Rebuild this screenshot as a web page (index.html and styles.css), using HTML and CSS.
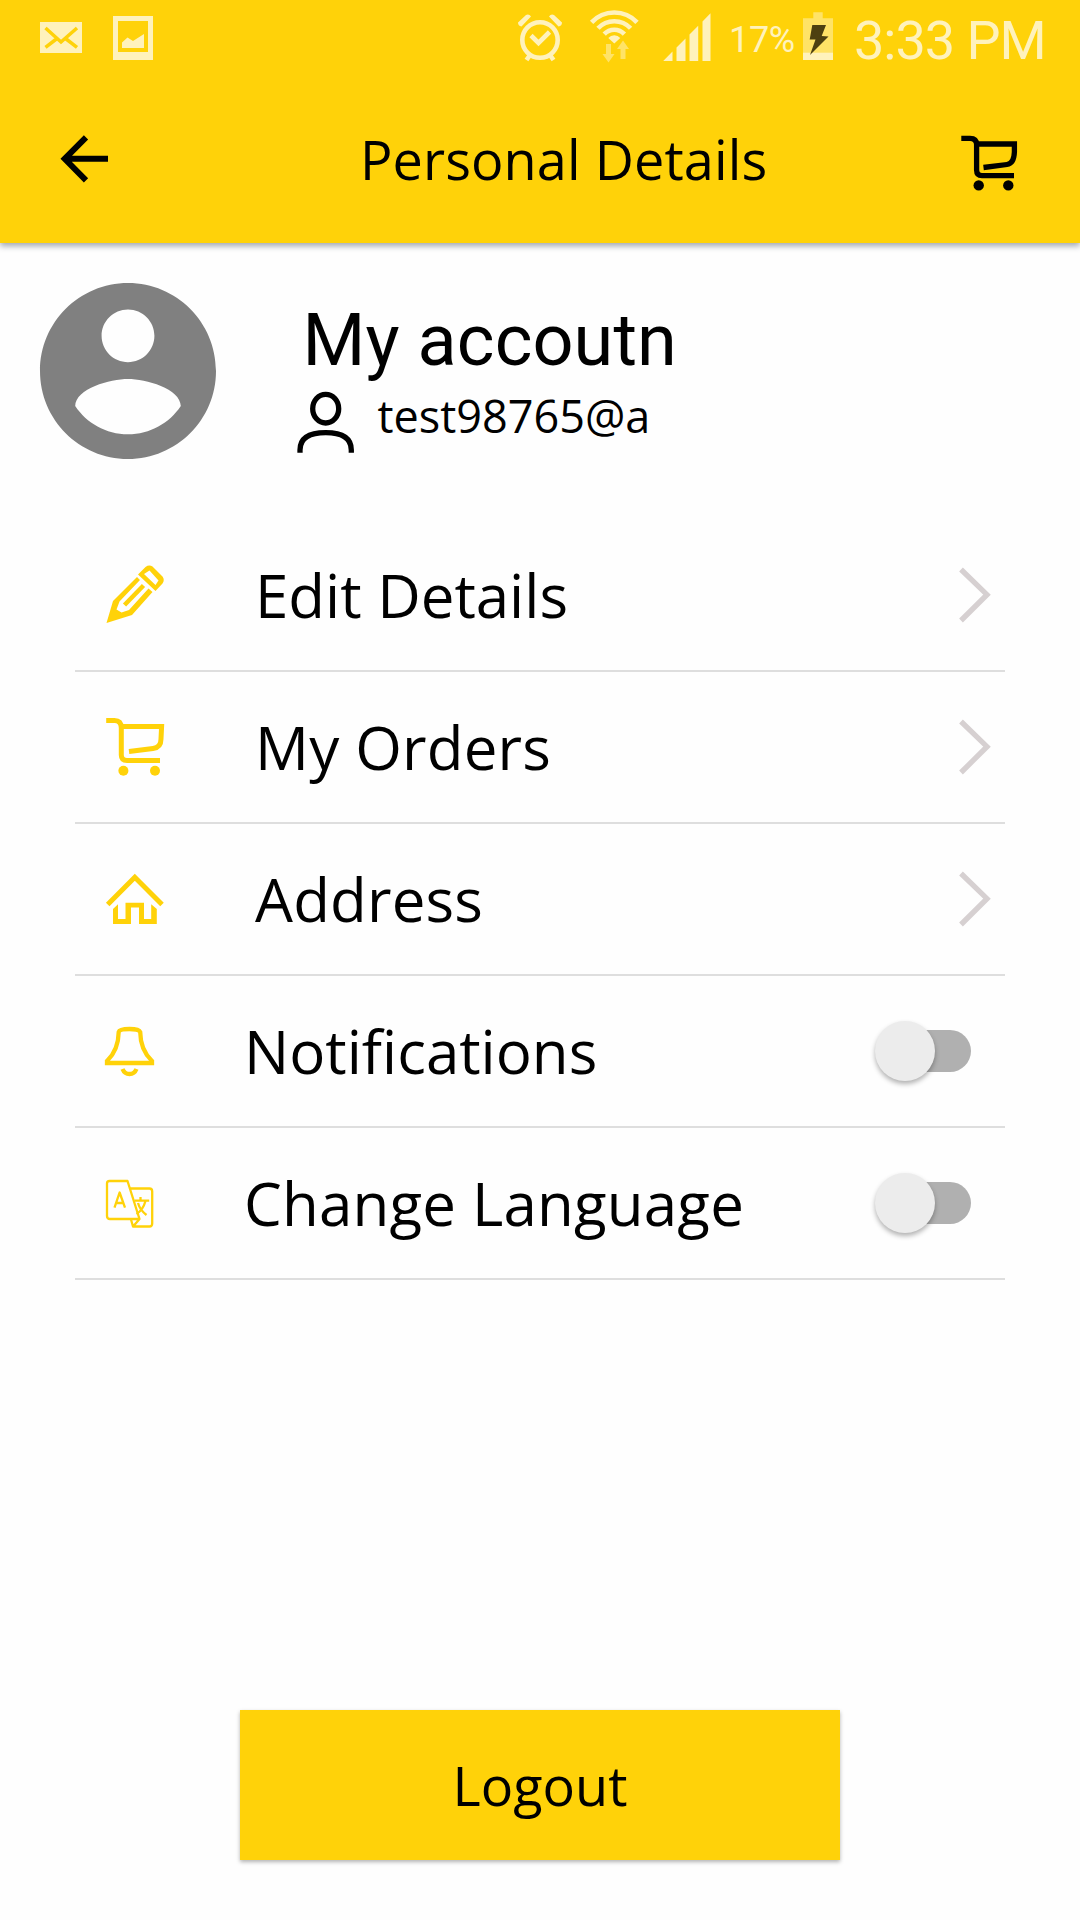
FILE: index.html
```html
<!DOCTYPE html>
<html lang="en">
<head>
<meta charset="utf-8">
<title>Personal Details</title>
<link rel="stylesheet" href="styles.css">
</head>
<body>
<div class="screen">
  <header class="header">
    <div class="status">
      <svg class="status-icon" width="42" height="75" viewBox="40 0 42 75">
        <path class="pale" d="M40 22h42v31H40z"/>
        <path class="cut" d="M45.5 28 61 42l16-14M45.5 47.3 57 38.5M65.500 38.500 77 47.300"/>
      </svg>
      <svg class="status-icon picture" width="40" height="75" viewBox="113 0 40 75">
        <path class="pale" fill-rule="evenodd" d="M113 16h40v44h-40zM118 21v31h30V21z"/>
        <path class="pale" d="M122 48v-5.500l5.500-5 5.500 3.500 11-7v14z"/>
      </svg>
      <svg class="status-icon alarm" width="46" height="75" viewBox="517 0 46 75">
        <circle class="pale-line" cx="540" cy="40" r="17.700"/>
        <path class="pale-line" d="M531 35.500l7.500 7.500 11-11M530 55l-3.500 5M550 55l3.500 5"/>
        <path class="pale" d="M518 22.500 526 15q3-1.500 5 1.500L521.500 26.500Q518 26 518 22.500zM562 22.500 554 15q-3-1.500-5 1.500L558.500 26.500Q562 26 562 22.500z"/>
      </svg>
      <svg class="status-icon wifi" width="50" height="75" viewBox="590 0 50 75">
        <path class="pale-line" d="M592.600 22.400a31 31 0 0 1 45.400 0M599 28.300a22.300 22.300 0 0 1 32.600 0M605.200 34.100a13.800 13.800 0 0 1 20.200 0"/>
        <path class="pale" d="M615.300 43.500l-6-5.500a8 8 0 0 1 12 0z"/>
        <path class="dim" d="M607 44h5v10h3.500l-6 8.500-6-8.500h3.500zM621.500 59h5V49h3.500l-6-8.500-6 8.500h3.500z"/>
      </svg>
      <svg class="status-icon signal" width="48" height="75" viewBox="663.500 0 48 75">
        <path class="pale" d="M663.700 61 673 51.600V61zM677 61V47.600l9-9V61zM690 61V34.500l8.700-8.800V61zM703 61V21.400l8-8.100V61z"/>
      </svg>
      <span class="percent">17%</span>
      <svg class="status-icon battery" width="30" height="75" viewBox="804 0 30 75">
        <path class="dim" d="M804 18.300h10.300v-6h9.400v6H834V53h-30z"/>
        <path class="pale" d="M804 52.700h30V60h-30z"/>
        <path class="bolt" d="M813.300 25H827l-4.300 11 6.800.5L811 55l5.500-15.500h-5.800z"/>
      </svg>
      <span class="clock">3:33 PM</span>
    </div>
    <div class="appbar">
      <svg width="52" height="60" viewBox="58 129 52 60">
        <path class="ink-line arrow" d="M86 137.300 64.700 158.800 86 180.300M66 158.800h42"/>
      </svg>
      <h1 class="title">Personal Details</h1>
      <svg class="bar-cart" width="58" height="60" viewBox="960 129 58 60">
        <path class="ink-line" d="M961.300 138.300H970Q976.600 138.300 976.600 144.500V170Q976.600 175.700 982 175.700H1014M977 144h37.400V152Q1014 163.500 1007 164.500L983.500 167.500"/>
        <circle cx="978.700" cy="185.400" r="5.200"/><circle cx="1008.300" cy="185.400" r="5.200"/>
      </svg>
    </div>
  </header>

  <section class="profile">
    <svg class="avatar" viewBox="2 2 20 20">
      <path d="M12 2C6.480 2 2 6.480 2 12s4.480 10 10 10 10-4.480 10-10S17.520 2 12 2zm0 3c1.660 0 3 1.340 3 3s-1.340 3-3 3-3-1.340-3-3 1.340-3 3-3zm0 14.200c-2.500 0-4.710-1.280-6-3.220.03-1.990 4-3.080 6-3.080 1.990 0 5.970 1.090 6 3.080-1.290 1.940-3.500 3.220-6 3.220z"/>
    </svg>
    <div class="identity">
      <h2 class="name">My accoutn</h2>
      <div class="account">
        <svg width="58" height="62" viewBox="297 391 58 62">
          <ellipse class="ink-line" cx="325.700" cy="408.700" rx="13" ry="14.300"/>
          <path class="ink-line" d="M300 452.700V450C300 438 309 432.700 325.700 432.700S351.300 438 351.300 450v2.700"/>
        </svg>
        <span class="email">test98765@a</span>
      </div>
    </div>
  </section>

  <ul class="menu">
    <li class="row">
      <svg class="icon" width="60" height="150" viewBox="105 520 60 150">
        <path fill-rule="evenodd" d="M137 577 113 601 106.500 623 132 615 152.500 592 148.500 588.500 129 610 121.500 612.500 116.500 609.500 119.500 601.500 140 580z"/>
        <path class="line pen-core" d="M143.500 585.500 124.500 605"/>
        <path fill-rule="evenodd" d="M138 574.500 145.500 567Q149 564.500 152.500 566.500L162.500 576.500Q165 580 162.500 583.500L155.500 591zM144 574 155.500 585 158.500 580.500 149.500 570.500z"/>
      </svg>
      <span class="label">Edit Details</span>
      <svg class="chevron" width="32" height="60" viewBox="960 565 32 60"><path d="M962 569.500 988 594.700 962 620.500"/></svg>
    </li>
    <li class="row">
      <svg class="icon" width="60" height="150" viewBox="105 672 60 150">
        <path class="line" d="M106.200 720.500H114.500Q121.300 720.500 121.300 728V755Q121.300 760.400 127 760.400H160M122 726.500h39.600L161 739Q161 747.500 153 748.500L129 751.500"/>
        <circle cx="123.400" cy="770.700" r="5"/><circle cx="155" cy="770.700" r="5"/>
      </svg>
      <span class="label wide">My Orders</span>
      <svg class="chevron" width="32" height="60" viewBox="960 565 32 60"><path d="M962 569.500 988 594.700 962 620.500"/></svg>
    </li>
    <li class="row">
      <svg class="icon" width="60" height="150" viewBox="105 824 60 150">
        <path class="line" d="M107.700 904.500 134.800 877.300 162 904.500"/>
        <path d="M113 909 118 904.300V919h7.500v-16.300H144V919h7.200V904.300l5.600 4.700v15H139V907.500h-8V924H113z"/>
      </svg>
      <span class="label wide">Address</span>
      <svg class="chevron" width="32" height="60" viewBox="960 565 32 60"><path d="M962 569.500 988 594.700 962 620.500"/></svg>
    </li>
    <li class="row toggle-row">
      <svg class="icon" width="48" height="150" viewBox="105 976 48 150">
        <path class="line bell" d="M107 1063V1061Q118.500 1050 118.700 1032 119.500 1029 129.500 1029 139 1029 140.200 1032 140.400 1050 152 1061V1063z"/>
        <path class="line bell" d="M122.500 1069Q124.500 1074 129.500 1074T136.500 1069"/>
      </svg>
      <span class="label">Notifications</span>
      <span class="switch"><span class="thumb"></span></span>
    </li>
    <li class="row toggle-row">
      <svg class="icon" width="48" height="150" viewBox="105 1128 48 150">
        <path class="line fine" d="M127.500 1181H109.500Q107 1181 107 1183.500V1216Q107 1219 110 1219H139.500zM129.500 1188.500H149.500Q152.200 1188.500 152.200 1191.500V1223.500Q152.200 1226.500 149.500 1226.500H133L131 1219.500M139.500 1219 133.500 1226"/>
        <path class="line fine" d="M114.500 1207.700 119.600 1192.500 125 1207.700M116.300 1203H123M140.500 1197V1200.700M134.500 1200.700H149.200M145.500 1201Q143 1210 136.500 1214M138 1203Q140 1210 146.500 1215"/>
      </svg>
      <span class="label wide">Change Language</span>
      <span class="switch"><span class="thumb"></span></span>
    </li>
  </ul>

  <button class="logout" type="button">Logout</button>
</div>
</body>
</html>
```
FILE: styles.css
```css
* { box-sizing: border-box; margin: 0; padding: 0; }

body { background: #fefefe; color: #000; font-family: "Open Sans", sans-serif; }

svg { display: block; flex: none; overflow: visible; }

.screen { display: flex; flex-direction: column; width: 1080px; height: 1920px; overflow: hidden; }

.header { flex: none; height: 243px; background: #ffd209; box-shadow: 0 3px 6px rgba(20, 35, 60, .4); }

.status { display: flex; align-items: center; height: 75px; padding-left: 40px; color: #fff2bc; font-family: Roboto, sans-serif; white-space: nowrap; }
.picture { margin-left: 31px; }
.alarm { margin-left: 364px; }
.wifi { margin-left: 26px; }
.signal { margin-left: 23.500px; }
.percent { width: 73px; margin-left: 18.500px; padding-top: 4px; font-size: 36px; line-height: 42px; letter-spacing: -.3px; }
.battery { margin-left: 1px; }
.clock { margin-left: 21px; padding-top: 6px; font-size: 54px; line-height: 64px; letter-spacing: -1px; }

.pale { fill: #fff2bc; }
.dim { fill: #ffe367; }
.bolt { fill: #4d4010; }
.cut { fill: none; stroke: #ffd209; stroke-width: 3.500; }
.pale-line { fill: none; stroke: #fff2bc; stroke-width: 4.600; }

.appbar { display: flex; align-items: center; height: 168px; padding-left: 58px; }
.title { width: 600px; margin-left: 250px; font-size: 54px; font-weight: 400; line-height: 74px; letter-spacing: .1px; white-space: nowrap; }
.ink-line { fill: none; stroke: #000; stroke-width: 5.300; }
.arrow { stroke-width: 6; }

.profile { display: flex; flex: none; height: 277px; padding: 39px 0 0 39px; }
.avatar { width: 176px; height: 176px; margin: .500px 0 0 .500px; fill: #808080; }
.identity { padding: 16px 0 0 81px; }
.name { padding-left: 6px; font-family: Roboto, sans-serif; font-size: 72px; font-weight: 400; line-height: 86px; letter-spacing: .1px; white-space: nowrap; }
.account { display: flex; margin-top: 7px; }
.email { margin-left: 23px; font-size: 45px; line-height: 50px; }

.menu { flex: none; width: 930px; margin-left: 75px; list-style: none; }
.row { display: flex; align-items: center; height: 152px; padding: 0 14px 0 30px; border-bottom: 2px solid #dedede; }
.icon { fill: #ffd209; }
.line { fill: none; stroke: #ffd209; stroke-width: 5; }
.pen-core { stroke-width: 4.500; }
.bell { stroke-width: 4.300; }
.fine { stroke-width: 2.300; stroke-linejoin: round; }
.label { flex: 1; margin-left: 90px; font-size: 60px; line-height: 82px; white-space: nowrap; }
.wide { letter-spacing: .200px; }
.toggle-row .label { margin-left: 91px; }
.chevron { fill: none; stroke: #d6d0d1; stroke-width: 5.300; }

.switch { flex: none; width: 84px; height: 42px; margin-right: 20px; border-radius: 21px; background: #b0b0b0; }
.thumb { display: block; width: 60px; height: 60px; margin: -9.500px 0 0 -12px; border-radius: 50%; background: #ececec; box-shadow: 0 3px 5px rgba(0, 0, 0, .3); }

.logout { width: 600px; height: 150px; margin: 430px 0 0 240px; border: 0; background: #ffd209; box-shadow: 0 2px 4px rgba(0, 0, 0, .3); color: #000; font: 54px/74px "Open Sans", sans-serif; }
```
